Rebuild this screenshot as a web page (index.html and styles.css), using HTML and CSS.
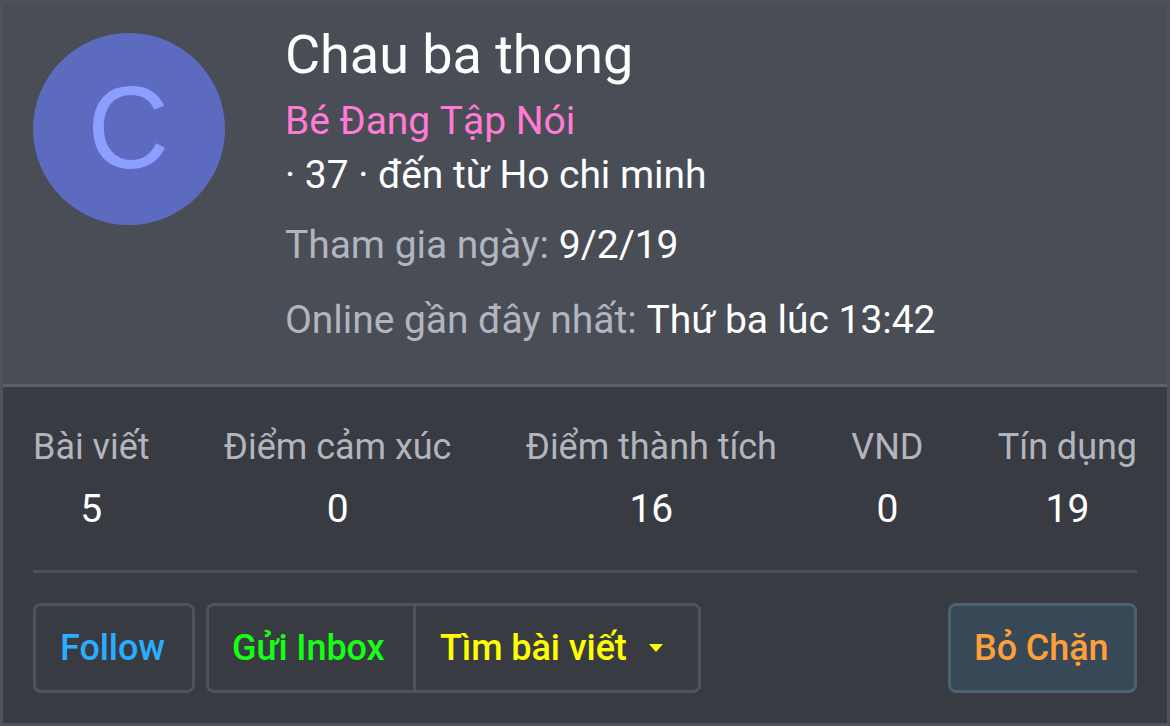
FILE: index.html
```html
<!DOCTYPE html>
<html lang="vi">
<head>
    <meta charset="UTF-8">
    <meta name="viewport" content="width=device-width, initial-scale=1.0">
    <title>Chau ba thong</title>
    <link rel="stylesheet" href="styles.css">
</head>
<body>
    <div class="member-card">
        <svg class="card-arrow" width="70" height="3" viewBox="0 0 70 3">
            <path d="M6 3L9 0H65L68 3Z" fill="#494d55"/>
            <path d="M6 3L10 -1M64 -1L68 3" stroke="#66696f" stroke-width="2"/>
        </svg>
        <div class="card-header">
            <div class="avatar"><span>C</span></div>
            <div class="card-info">
                <h4 class="name">Chau ba thong</h4>
                <div class="blurb blurb-title">Bé Đang Tập Nói</div>
                <div class="blurb">· 37 · đến từ Ho chi minh</div>
                <dl class="pair joined">
                    <dt>Tham gia ngày:</dt>
                    <dd>9/2/19</dd>
                </dl>
                <dl class="pair seen">
                    <dt>Online gần đây nhất:</dt>
                    <dd>Thứ ba lúc 13:42</dd>
                </dl>
            </div>
        </div>
        <div class="card-body">
            <div class="stats">
                <dl class="stat"><dt>Bài viết</dt><dd>5</dd></dl>
                <dl class="stat"><dt>Điểm cảm xúc</dt><dd>0</dd></dl>
                <dl class="stat"><dt>Điểm thành tích</dt><dd>16</dd></dl>
                <dl class="stat"><dt>VND</dt><dd>0</dd></dl>
                <dl class="stat"><dt>Tín dụng</dt><dd>19</dd></dl>
            </div>
            <hr class="divider">
            <div class="actions">
                <button type="button" class="button follow">Follow</button>
                <div class="button-group">
                    <button type="button" class="button inbox">Gửi Inbox</button>
                    <button type="button" class="button find">
                        Tìm bài viết
                        <svg class="caret" width="14" height="8" viewBox="0 0 14 8">
                            <path d="M0 0H14L7 8Z"/>
                        </svg>
                    </button>
                </div>
                <button type="button" class="button block">Bỏ Chặn</button>
            </div>
        </div>
    </div>
</body>
</html>
```

FILE: styles.css
```css
* {
    box-sizing: border-box;
}

body {
    margin: 0;
    font-family: Roboto, sans-serif;
    font-size: 39px;
    line-height: 54px;
    letter-spacing: -0.04px;
    color: #fefefe;
    background-color: #393b42;
}

h4, dl, dt, dd {
    margin: 0;
    font-weight: 400;
}

.member-card {
    position: relative;
    width: 1170px;
    height: 726px;
    border: 3px solid #505259;
    background: #393b42;
    overflow: hidden;
}

/* base of the tooltip arrow, sits on the top border */
.card-arrow {
    position: absolute;
    top: -3px;
    left: 57px;
}

.card-header {
    display: flex;
    gap: 60px;
    height: 384px;
    padding: 30px 30px 0;
    background: #494d55;
    border-bottom: 3px solid #5d6067;
}

.avatar {
    display: flex;
    align-items: center;
    justify-content: center;
    flex: none;
    width: 192px;
    height: 192px;
    border-radius: 50%;
    background: #5c6bc0;
    color: #8c9eff;
    font-family: "Liberation Sans", Arial, sans-serif;
    font-size: 117px;
    line-height: 188px;
}

.avatar span {
    margin: -3px 2px 0 0;
    transform: scaleX(0.97);
}

.card-info {
    margin-top: -16px;
    white-space: nowrap;
}

.name {
    font-size: 54px;
    line-height: 76px;
    margin-bottom: 1px;
}

.blurb-title {
    color: #ff7bd5;
    font-kerning: none;
}

.pair {
    display: flex;
    gap: 10px;
}

.pair dt {
    color: #b2b5be;
}

.joined {
    margin-top: 16px;
}

.seen {
    margin-top: 21px;
}

.card-body {
    padding: 35px 30px 30px;
}

.stats {
    display: flex;
    justify-content: space-between;
    text-align: center;
    white-space: nowrap;
}

.stat dt {
    font-size: 36px;
    line-height: 50px;
    color: #b2b5be;
}

.stat dd {
    margin-top: 10px;
}

.divider {
    height: 3px;
    margin: 34px 0 30px;
    border: none;
    background: #4d4f53;
}

.actions {
    display: flex;
}

.button {
    display: flex;
    align-items: center;
    height: 90px;
    padding: 0 24px;
    border: 3px solid #505259;
    border-radius: 8px;
    background: transparent;
    font-family: inherit;
    font-size: 36px;
    font-weight: 500;
    line-height: 50px;
    letter-spacing: -0.08px;
    white-space: nowrap;
    cursor: pointer;
}

.button-group {
    display: flex;
    margin-left: 11px;
}

.follow {
    width: 162px;
    color: #2badff;
}

.inbox {
    width: 207px;
    padding-left: 23px;
    color: #15ff15;
    border-right: none;
    border-radius: 8px 0 0 8px;
}

.find {
    width: 288px;
    color: #ffff00;
    border-radius: 0 8px 8px 0;
}

.caret {
    margin-left: 22px;
    fill: currentColor;
}

.block {
    width: 189px;
    padding-left: 23px;
    margin-left: auto;
    color: #ff9f3b;
    background: #374956;
    border-color: #4d606e;
}
```
